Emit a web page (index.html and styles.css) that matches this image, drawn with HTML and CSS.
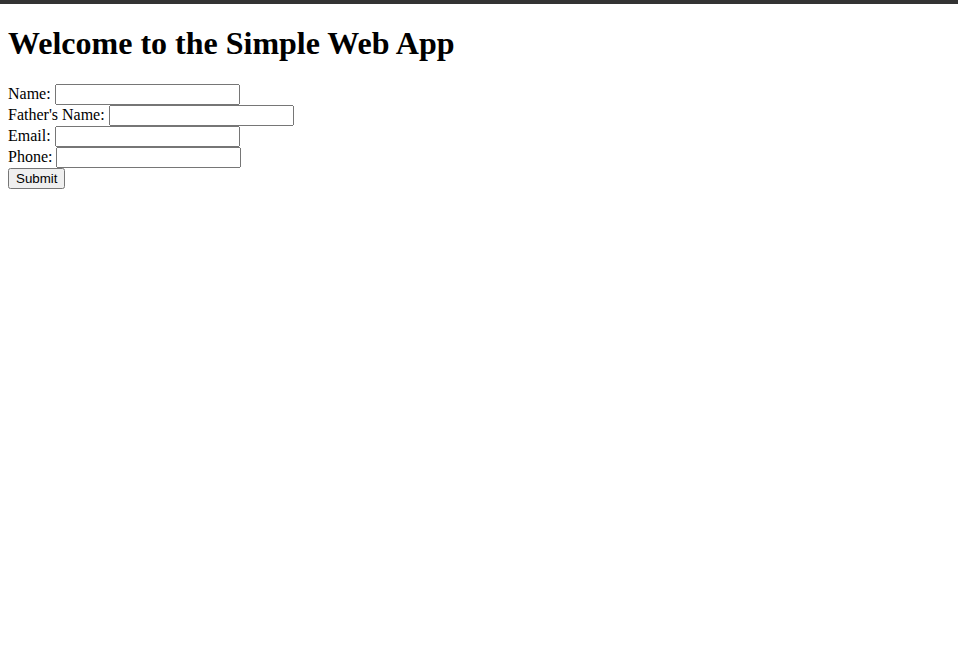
FILE: index.html
```html
<!DOCTYPE html>
<html>
<head>
<meta charset="utf-8">
<title>Simple Web App</title>
<link rel="stylesheet" href="styles.css">
</head>
<body>
<div class="topbar"></div>
<main class="content">
  <h1 class="title">Welcome to the Simple Web App</h1>
  <form class="form">
    <label for="name">Name:</label>
    <input type="text" id="name" name="name"><br>
    <label for="father">Father's Name:</label>
    <input type="text" id="father" name="father"><br>
    <label for="email">Email:</label>
    <input type="email" id="email" name="email"><br>
    <label for="phone">Phone:</label>
    <input type="tel" id="phone" name="phone"><br>
    <input type="submit" value="Submit">
  </form>
</main>
</body>
</html>
```

FILE: styles.css
```css
html, body {
  margin: 0;
  padding: 0;
  background: #fff;
}
body {
  font-family: "Liberation Serif", "Times New Roman", serif;
  font-size: 16px;
  color: #000;
}
.topbar {
  height: 4px;
  background: #333;
}
.content {
  padding: 0 8px 8px;
}
.title {
  font-size: 32px;
  font-weight: bold;
  margin: 21.44px 0;
}
.form {
  margin: 0;
}
```
